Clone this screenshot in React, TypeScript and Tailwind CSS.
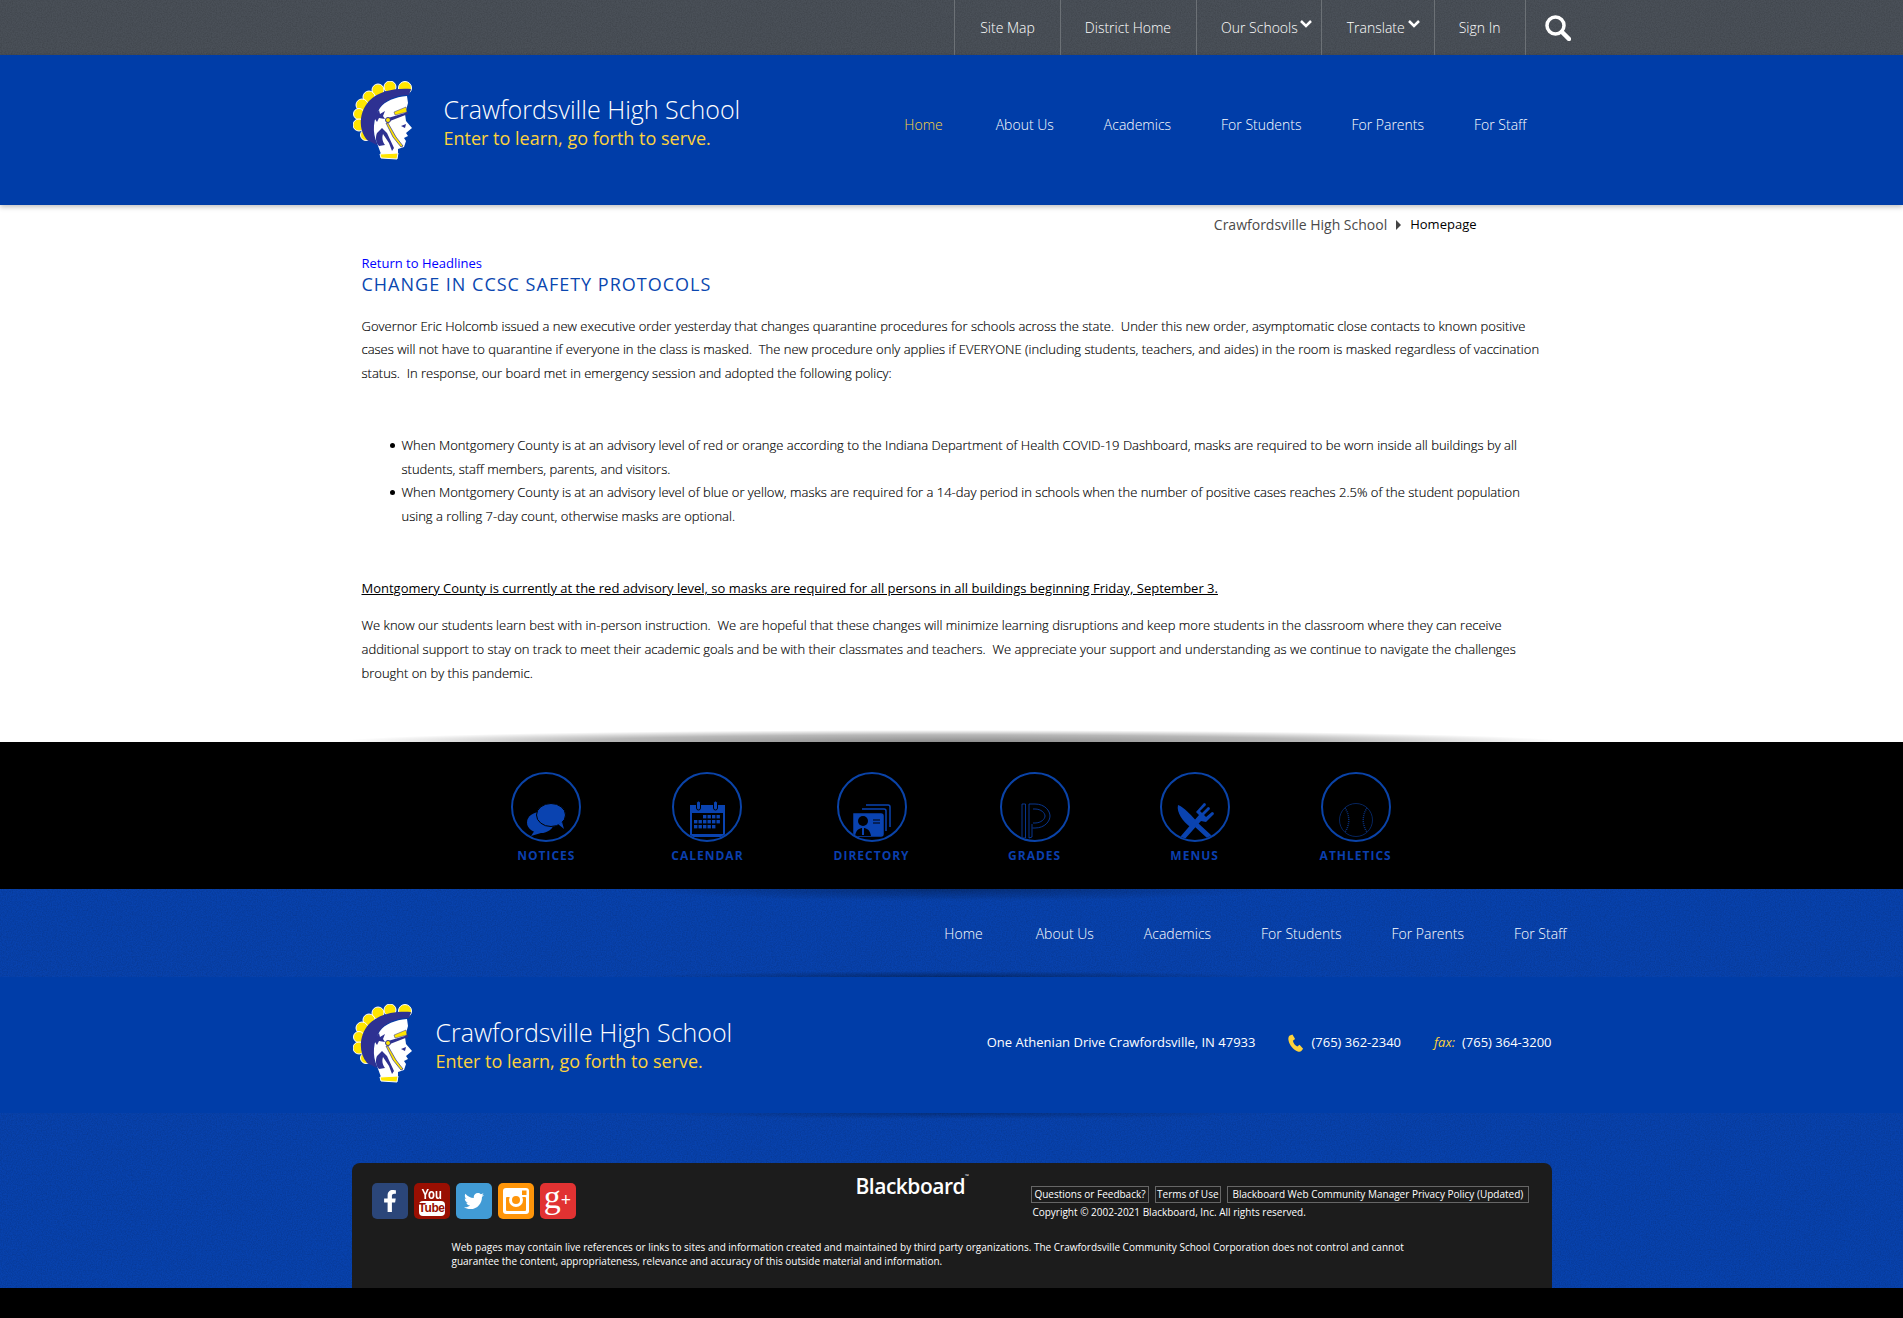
import { FaFacebookF, FaTwitter } from "react-icons/fa";

const TOP_LINKS = ["Site Map", "District Home", "Our Schools", "Translate", "Sign In"];
const MAIN_NAV = ["Home", "About Us", "Academics", "For Students", "For Parents", "For Staff"];

const TOP_PADDING: Record<string, string> = {
  "Site Map": "pl-[25px] pr-[25px]",
  "District Home": "pl-[24px] pr-[25px]",
  "Our Schools": "pl-[24px] pr-[23px]",
  Translate: "pl-[25px] pr-[29px]",
  "Sign In": "pl-[24px] pr-[24px]",
};

function Grain({ id }: { id: string }) {
  return (
    <svg className="absolute inset-0 h-full w-full">
      <filter id={id}>
        <feTurbulence type="fractalNoise" baseFrequency="0.8" numOctaves="2" stitchTiles="stitch" />
        <feColorMatrix values="0 0 0 0 0  0 0 0 0 0  0 0 0 0 0  0 0 0 1.1 -0.38" />
      </filter>
      <rect width="100%" height="100%" filter={`url(#${id})`} opacity="0.22" />
    </svg>
  );
}

function Logo() {
  return (
    <svg width="60" height="80" viewBox="0 0 60 80" className="shrink-0">
      <g fill="#ffe600" stroke="#fff" strokeWidth="1">
        <circle cx="52" cy="7" r="6.500" />
        <circle cx="37" cy="6" r="6" />
        <circle cx="25" cy="9" r="6" />
        <circle cx="16" cy="16" r="6" />
        <circle cx="9" cy="24" r="6" />
        <circle cx="6" cy="33" r="5.500" />
        <circle cx="6" cy="44" r="6" />
        <circle cx="13" cy="54" r="5.500" />
      </g>
      <path d="M58 8C44 7 27 9 16 20 6 31 5 48 14 59l10 5C19 50 20 34 29 24c7-7 17-10 27-10z" fill="#2e3192" />
      <path d="M54 15C42 16 32 20 27 27c-7 10-8 25-3 35l4 11h17v-5l6-2 2-6-2-3 4-2-2-3 6-5-6-7-1-7 3-11z" fill="#fff" />
      <path d="M35 37l20-6v2l-18 7z" fill="#2e3192" />
      <path d="M41 31l12-5 1 5-12 3z" fill="#ffe600" stroke="#2e3192" strokeWidth="0.500" />
      <path d="M22 34l4-5 1 4 5-3-2 5 2 3-6-1-2 4-2-3z" fill="#2e3192" />
      <path d="M24 52c-2 5-1 10 2 13l6-1c-3-4-3-8-2-11l6 9 3 8 2-3-7-15-5-5z" fill="#2e3192" />
      <path d="M35 42l8 14 7 9-2 1-8-10-7-14z" fill="#ffe600" stroke="#2e3192" strokeWidth="0.700" />
      <circle cx="35" cy="39" r="2.500" fill="#ffe600" stroke="#2e3192" />
      <path d="M48 45l5-2-1 4z" fill="#2e3192" />
      <path d="M27 73l18-1-1 6-16-1z" fill="#ffe600" stroke="#fff" />
    </svg>
  );
}

function Brand({ gap }: { gap: string }) {
  return (
    <div className={`flex items-start ${gap}`}>
      <Logo />
      <div className="pt-[10px]">
        <div className="text-[25px] leading-[36px] font-light text-white">Crawfordsville High School</div>
        <div className="text-[18px] leading-[22px] text-[#fdd33c]">Enter to learn, go forth to serve.</div>
      </div>
    </div>
  );
}

function IconCircle({ label, children }: { label: string; children: React.ReactNode }) {
  return (
    <div className="flex min-w-[70px] flex-col items-center">
      <div className="h-[70px] w-[70px] overflow-hidden rounded-full border-2 border-[#0a43a8]">{children}</div>
      <div className="mt-[5px] text-[12px] leading-[18px] font-bold tracking-[1px] text-[#0b3fae]">{label}</div>
    </div>
  );
}

function QuickIcons() {
  return (
    <div className="flex justify-center gap-[90px]">
      <IconCircle label="NOTICES">
        <svg viewBox="0 0 66 66" className="h-full w-full" fill="#0a43b0">
          <ellipse cx="27.500" cy="48.500" rx="13.500" ry="10.500" />
          <path d="M22 56l-4 6 10-3z" />
          <ellipse cx="38" cy="41" rx="14.500" ry="11.500" stroke="#000" strokeWidth="1" />
          <path d="M45 50l6 5-2-7z" />
        </svg>
      </IconCircle>
      <IconCircle label="CALENDAR">
        <svg viewBox="0 0 66 66" className="h-full w-full" fill="#0a43b0">
          <path d="M16 31h35v32H16z" />
          <path d="M18 39h31v21H18z" fill="#000" />
          <rect x="22.500" y="27" width="4" height="9" rx="2" stroke="#000" />
          <rect x="39.500" y="27" width="4" height="9" rx="2" stroke="#000" />
          {[0, 1, 2, 3].map((c) => (
            <rect key={`a${c}`} x={29 + c * 4.500} y="41" width="3.400" height="3.400" />
          ))}
          {[0, 1, 2, 3, 4, 5].map((c) => (
            <rect key={`b${c}`} x={20 + c * 4.500} y="46" width="3.400" height="3.400" />
          ))}
          {[0, 1, 2, 3, 4].map((c) => (
            <rect key={`c${c}`} x={20 + c * 4.500} y="51" width="3.400" height="3.400" />
          ))}
        </svg>
      </IconCircle>
      <IconCircle label="DIRECTORY">
        <svg viewBox="0 0 66 66" className="h-full w-full" fill="none" stroke="#0a43b0" strokeWidth="1.500">
          <path d="M27 31h22q2 0 2 2v20" />
          <path d="M23 35h22q2 0 2 2v20" />
          <path d="M15 40h27q2 0 2 2v18q0 2-2 2H17q-2 0-2-2z" fill="#0a43b0" />
          <circle cx="24" cy="47" r="5" fill="#000" stroke="none" />
          <path d="M16 62c1-6 4-8 8-8s7 2 8 8z" fill="#000" stroke="none" />
          <path d="M24 54v7" stroke="#0a43b0" strokeWidth="2" />
          <path d="M34 46h7M34 49h7" stroke="#000" strokeWidth="1" />
        </svg>
      </IconCircle>
      <IconCircle label="GRADES">
        <svg viewBox="0 0 66 66" className="h-full w-full" fill="none" stroke="#0a43b0" strokeWidth="0.800">
          <path d="M20 30h3.500v34H20zM27 64l3-1V50" />
          <path d="M27 64V30h6c10 0 15 7 15 12s-5 12-15 12h-2.500" />
          <path d="M31 35h2c6 0 10 4 10 7s-4 7-10 7h-2" />
        </svg>
      </IconCircle>
      <IconCircle label="MENUS">
        <svg viewBox="0 0 66 66" className="h-full w-full" fill="#0a43b0">
          <path d="M16 31c6 2 14 11 20 18l-5 6-4-3c-5-4-13-13-11-21z" />
          <path d="M19 62l18-21-3-3 8-9q2 0 2 2l-6 6 2 2 6-6q2 0 2 2l-6 6 2 2 6-5q2 0 2 2l-8 8-5-1-17 19q-3 2-5-1z" />
          <path d="M36 49l13 12q1 2-1 3-2 1-3 0L32 52z" />
        </svg>
      </IconCircle>
      <IconCircle label="ATHLETICS">
        <svg viewBox="0 0 66 66" className="h-full w-full" fill="none" stroke="#0a3c9c" strokeWidth="0.600">
          <circle cx="33" cy="46" r="16.500" />
          <path d="M22 34c5 7 5 17 0 24M44 34c-5 7-5 17 0 24" strokeWidth="1.500" strokeDasharray="0.800 1.200" />
        </svg>
      </IconCircle>
    </div>
  );
}

function SocialIcons() {
  return (
    <div className="flex gap-[6px]">
      <div className="flex h-[36px] w-[36px] items-center justify-center rounded-[5px] bg-[#2b4679] text-white">
        <FaFacebookF size={22} />
      </div>
      <div className="flex h-[36px] w-[36px] flex-col items-center justify-center rounded-[5px] bg-[#990f02] font-['Liberation_Sans',sans-serif] font-bold text-white">
        <span className="scale-x-75 text-[15px] leading-[15px]">You</span>
        <span className="w-[26px] rounded-[4px] bg-white text-center text-[12px] leading-[15px] tracking-[-0.5px] text-[#990f02]">Tube</span>
      </div>
      <div className="flex h-[36px] w-[36px] items-center justify-center rounded-[5px] bg-[#419bd5] text-white">
        <FaTwitter size={20} />
      </div>
      <div className="flex h-[36px] w-[36px] items-center justify-center rounded-[5px] bg-[#ff9509]">
        <svg width="28" height="28" viewBox="0 0 28 28">
          <rect x="1" y="1" width="26" height="26" rx="3" fill="#fff" />
          <rect x="4" y="10" width="20" height="14" rx="1" fill="#ff9509" />
          <circle cx="14" cy="13" r="7" fill="#fff" />
          <circle cx="14" cy="13" r="4" fill="#ff9509" />
          <rect x="20" y="3.500" width="4.500" height="4.500" fill="#ff9509" />
        </svg>
      </div>
      <div className="flex h-[36px] w-[36px] items-center justify-center rounded-[5px] bg-[#e13232] font-['Liberation_Serif',serif] text-white">
        <span className="-mt-[9px] text-[34px] leading-[34px]">g</span>
        <span className="-mt-[3px] text-[18px] leading-[18px] font-bold">+</span>
      </div>
    </div>
  );
}

function Bullet({ children }: { children: React.ReactNode }) {
  return (
    <li className="flex">
      <span className="mt-[9px] mr-[7px] h-[5px] w-[5px] shrink-0 rounded-full bg-black" />
      <div>{children}</div>
    </li>
  );
}

export default function App() {
  return (
    <div className="min-h-[1318px] bg-black font-['Open_Sans',sans-serif]">
      <div className="relative h-[55px] bg-[#4a5058]">
        <Grain id="grain-top" />
        <div className="relative mx-auto flex h-full w-[1200px] justify-end text-[14px] font-light text-white">
          {TOP_LINKS.map((link) => (
            <a key={link} className={`relative flex items-center border-l border-[#6c7176] ${TOP_PADDING[link]}`}>
              {link}
              {(link === "Our Schools" || link === "Translate") && (
                <svg width="12" height="8" viewBox="0 0 12 8" className={`absolute top-[20px] ${link === "Translate" ? "right-[14px]" : "right-[9px]"}`} fill="none" stroke="#fff" strokeWidth="2.500">
                  <path d="M1 1l5 5 5-5" />
                </svg>
              )}
            </a>
          ))}
          <div className="flex items-center border-l border-[#6c7176] pl-[19px]">
            <svg width="26" height="26" viewBox="0 0 26 26" fill="none" stroke="#fff" className="-mr-[19px]">
              <circle cx="10.500" cy="10.500" r="8.500" strokeWidth="3.500" />
              <path d="M17 17l7 7" strokeWidth="4.500" strokeLinecap="round" />
            </svg>
          </div>
        </div>
      </div>

      <header className="relative h-[150px] bg-[#003da8] shadow-[0_2px_5px_rgba(0,0,0,0.25)]">
        <div className="mx-auto flex w-[1200px] items-start justify-between pt-[26px] pl-[1px]">
          <Brand gap="gap-[31px]" />
          <div className="pt-[33px] pr-[25px]">
            <nav className="flex gap-[50px] text-[14px] font-light text-white">
              {MAIN_NAV.map((item, i) => (
                <a key={item} className={i === 0 ? "mr-[3px] text-[#fdd33c]" : ""}>
                  {item}
                </a>
              ))}
            </nav>
          </div>
        </div>
      </header>

      <main className="flex h-[537px] flex-col bg-white">
        <div className="mx-auto w-[1200px] pl-[10px] text-[13px] leading-[23.7px] font-light text-black [-webkit-text-stroke:0.15px_black]">
          <div className="flex items-center justify-end gap-[9px] pt-[8px] pr-[75px] font-normal [-webkit-text-stroke:0]">
            <span className="text-[14px] text-[#4a4a4a]">Crawfordsville High School</span>
            <span className="h-0 w-0 border-y-[5px] border-l-[5px] border-y-transparent border-l-[#444]" />
            <span className="text-black">Homepage</span>
          </div>
          <a className="mt-[18px] block leading-[16px] font-normal text-[#0000ff] [-webkit-text-stroke:0]">Return to Headlines</a>
          <h1 className="text-[18px] leading-[26px] font-normal tracking-[1px] text-[#0a47b0] [-webkit-text-stroke:0]">CHANGE IN CCSC SAFETY PROTOCOLS</h1>
          <p className="mt-[18px] w-[1190px]">
            Governor Eric Holcomb issued a new executive order yesterday that changes quarantine procedures for schools across the state.&nbsp; Under this new order, asymptomatic close contacts to known positive cases will not have to quarantine if everyone in the class is masked.&nbsp; The new procedure only applies if EVERYONE (including students, teachers, and aides) in the room is masked regardless of vaccination status.&nbsp; In response, our board met in emergency session and adopted the following policy:
          </p>
          <ul className="mt-[48px] w-[1178px] pl-[28px]">
            <Bullet>When Montgomery County is at an advisory level of red or orange according to the Indiana Department of Health COVID-19 Dashboard, masks are required to be worn inside all buildings by all students, staff members, parents, and visitors.</Bullet>
            <Bullet>When Montgomery County is at an advisory level of blue or yellow, masks are required for a 14-day period in schools when the number of positive cases reaches 2.5% of the student population using a rolling 7-day count, otherwise masks are optional.</Bullet>
          </ul>
          <p className="mt-[48px] font-normal text-black underline [-webkit-text-stroke:0]">Montgomery County is currently at the red advisory level, so masks are required for all persons in all buildings beginning Friday, September 3.</p>
          <p className="mt-[14px] w-[1180px]">
            We know our students learn best with in-person instruction.&nbsp; We are hopeful that these changes will minimize learning disruptions and keep more students in the classroom where they can receive additional support to stay on track to meet their academic goals and be with their classmates and teachers.&nbsp; We appreciate your support and understanding as we continue to navigate the challenges brought on by this pandemic.
          </p>
        </div>
        <div className="mx-auto mt-auto h-[12px] w-[1230px] bg-[radial-gradient(ellipse_50%_100%_at_50%_100%,rgba(0,0,0,0.45),rgba(0,0,0,0.28)_60%,transparent)]" />
      </main>

      <section className="h-[147px] bg-black pt-[30px]">
        <QuickIcons />
      </section>

      <footer className="h-[399px] bg-[#0842ad]">
        <div className="relative flex h-[88px] flex-col justify-between">
          <Grain id="grain-nav" />
          <div className="absolute inset-x-0 top-0 mx-auto h-[12px] w-[640px] bg-[radial-gradient(ellipse_50%_100%_at_50%_0%,rgba(0,0,0,0.3),transparent)]" />
          <div className="absolute inset-x-0 bottom-0 mx-auto h-[6px] w-[640px] bg-[radial-gradient(ellipse_50%_100%_at_50%_100%,rgba(0,0,0,0.35),transparent)]" />
          <div className="relative mx-auto flex h-full w-[1200px] items-center justify-end text-[14px] font-light text-white">
            <nav className="-mr-[15px] flex gap-[50px]">
              {MAIN_NAV.map((item, i) => (
                <a key={item} className={i === 0 ? "mr-[3px]" : ""}>
                  {item}
                </a>
              ))}
            </nav>
          </div>
        </div>
        <div className="h-[136px] bg-[#003da8]">
          <div className="mx-auto flex w-[1200px] items-start justify-between pt-[27px] pl-[1px]">
            <Brand gap="gap-[23px]" />
            <div className="flex items-center pt-[29px] text-[13px] text-white">
              <span>One Athenian Drive Crawfordsville, IN 47933</span>
              <svg width="16" height="18" viewBox="0 0 18 19" className="ml-[33px]" fill="#fdd33c">
                <path d="M2 1l3-1 3 5-2.500 2c.5 3 2.500 5 5 6.500l2.500-2 4 4.500-2 2.500c-1 1-2.500 1-4 .5C6 17 1.500 12 .5 6 .2 4 .5 2 2 1z" />
              </svg>
              <span className="ml-[7px]">(765) 362-2340</span>
              <span className="ml-[33px] text-[#fdd33c] italic">fax:</span>
              <span className="ml-[7px]">(765) 364-3200</span>
            </div>
          </div>
        </div>
        <div className="relative h-[175px] overflow-hidden pt-[50px]">
          <Grain id="grain-bottom" />
          <div className="absolute inset-x-0 top-0 mx-auto h-[6px] w-[640px] bg-[radial-gradient(ellipse_50%_100%_at_50%_0%,rgba(0,0,0,0.25),transparent)]" />
          <div className="relative mx-auto h-[125px] w-[1200px] rounded-t-[8px] bg-[#1c1c1c] px-[20px] pt-[20px] text-[10px] text-white">
            <div className="flex items-start">
              <SocialIcons />
              <div className="ml-[280px] -mt-[9px] text-[21px] leading-[24px] font-semibold tracking-[-0.5px]">
                Blackboard<span className="align-top text-[5px] leading-[5px]">™</span>
              </div>
              <div className="ml-[63px] pt-[3px]">
                <div className="flex gap-[6px]">
                  <a className="border border-[#666] px-[2px] leading-[15px]">Questions or Feedback?</a>
                  <a className="border border-[#666] px-[1.5px] leading-[15px]">Terms of Use</a>
                  <a className="border border-[#666] px-[4.5px] leading-[15px]">Blackboard Web Community Manager Privacy Policy (Updated)</a>
                </div>
                <div className="mt-[2px] pl-[1px] leading-[14px]">Copyright © 2002-2021 Blackboard, Inc. All rights reserved.</div>
              </div>
            </div>
            <div className="mt-[21px] ml-[80px] w-[980px] leading-[14px]">
              Web pages may contain live references or links to sites and information created and maintained by third party organizations. The Crawfordsville Community School Corporation does not control and cannot guarantee the content, appropriateness, relevance and accuracy of this outside material and information.
            </div>
          </div>
        </div>
      </footer>
    </div>
  );
}
